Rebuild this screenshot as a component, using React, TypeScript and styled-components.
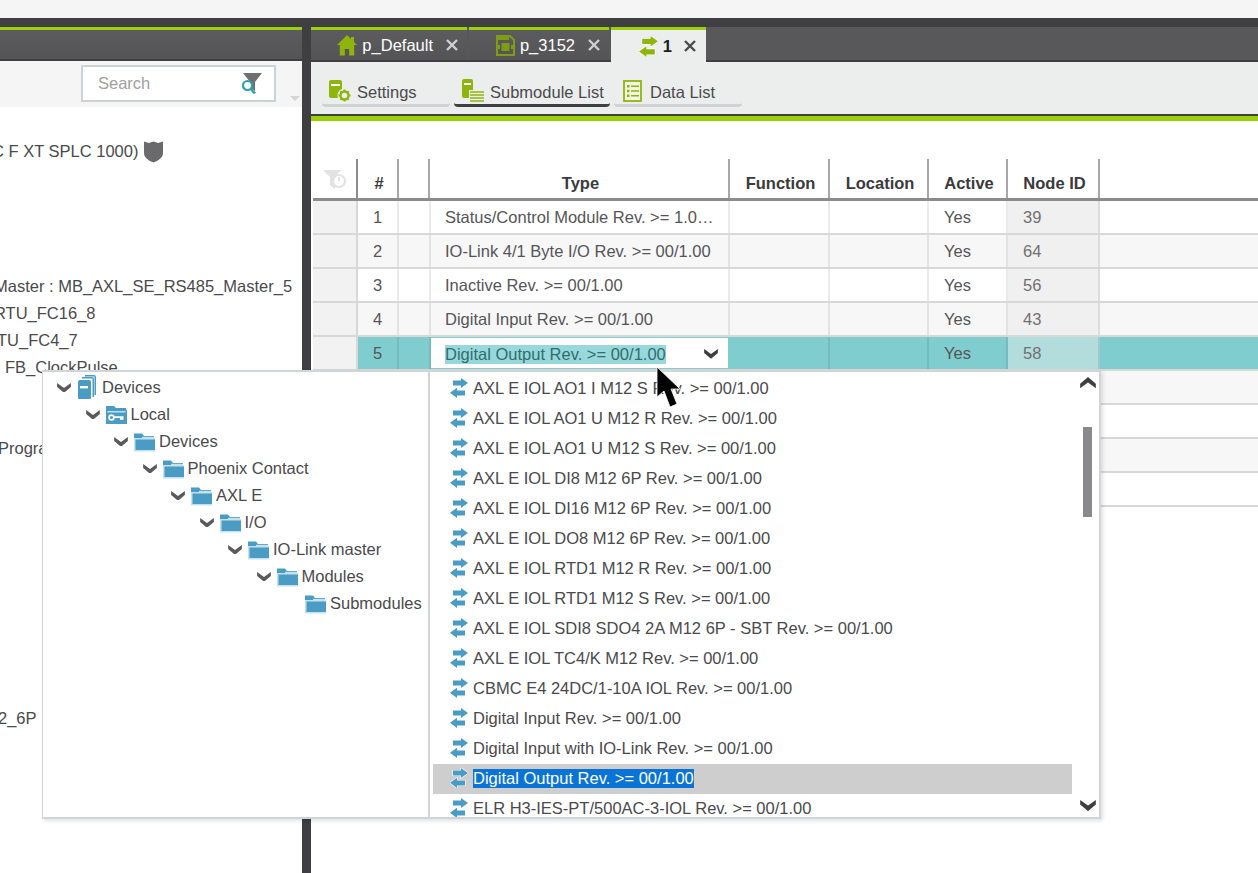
import React from "react";
import styled, { createGlobalStyle } from "styled-components";

const GREEN = "#8fb50c";
const BLUE = "#4a9cc4";

const treeLines = [
  { text: "C F XT SPLC 1000)", shift: -8, shield: true },
  { text: "" },
  { text: "" },
  { text: "" },
  { text: "" },
  { text: "Master : MB_AXL_SE_RS485_Master_5", shift: -6 },
  { text: "RTU_FC16_8", shift: -6 },
  { text: "TU_FC4_7", shift: -3 },
  { text: "FB_ClockPulse", shift: 5 },
  { text: "" },
  { text: "" },
  { text: "Program", shift: -2 },
  { text: "" },
  { text: "" },
  { text: "" },
  { text: "" },
  { text: "" },
  { text: "" },
  { text: "" },
  { text: "" },
  { text: "" },
  { text: "2_6P", shift: -2 },
];

const rows = [
  { n: 1, type: "Status/Control Module Rev. >= 1.00/1.00", active: "Yes", node: "39" },
  { n: 2, type: "IO-Link 4/1 Byte I/O Rev. >= 00/1.00", active: "Yes", node: "64" },
  { n: 3, type: "Inactive Rev. >= 00/1.00", active: "Yes", node: "56" },
  { n: 4, type: "Digital Input Rev. >= 00/1.00", active: "Yes", node: "43" },
  { n: 5, type: "Digital Output Rev. >= 00/1.00", active: "Yes", node: "58", selected: true },
  { n: 6, type: "", active: "", node: "" },
  { n: 7, type: "", active: "", node: "" },
  { n: 8, type: "", active: "", node: "" },
  { n: 9, type: "", active: "", node: "" },
];

const folders = [
  { label: "Devices", level: 0, icon: "stack" },
  { label: "Local", level: 1, icon: "key" },
  { label: "Devices", level: 2, icon: "folder" },
  { label: "Phoenix Contact", level: 3, icon: "folder" },
  { label: "AXL E", level: 4, icon: "folder" },
  { label: "I/O", level: 5, icon: "folder" },
  { label: "IO-Link master", level: 6, icon: "folder" },
  { label: "Modules", level: 7, icon: "folder" },
  { label: "Submodules", level: 8, icon: "folder", leaf: true },
];

const modules = [
  "AXL E IOL AO1 I M12 S Rev. >= 00/1.00",
  "AXL E IOL AO1 U M12 R Rev. >= 00/1.00",
  "AXL E IOL AO1 U M12 S Rev. >= 00/1.00",
  "AXL E IOL DI8 M12 6P Rev. >= 00/1.00",
  "AXL E IOL DI16 M12 6P Rev. >= 00/1.00",
  "AXL E IOL DO8 M12 6P Rev. >= 00/1.00",
  "AXL E IOL RTD1 M12 R Rev. >= 00/1.00",
  "AXL E IOL RTD1 M12 S Rev. >= 00/1.00",
  "AXL E IOL SDI8 SDO4 2A M12 6P - SBT Rev. >= 00/1.00",
  "AXL E IOL TC4/K M12 Rev. >= 00/1.00",
  "CBMC E4 24DC/1-10A IOL Rev. >= 00/1.00",
  "Digital Input Rev. >= 00/1.00",
  "Digital Input with IO-Link Rev. >= 00/1.00",
  "Digital Output Rev. >= 00/1.00",
  "ELR H3-IES-PT/500AC-3-IOL Rev. >= 00/1.00",
];

const Swap = ({ color = BLUE, halo = false, size = 18 }: { color?: string; halo?: boolean; size?: number }) => (
  <svg width={size} height={size + 2} viewBox="0 0 18 20">
    <g fill={color} stroke={halo ? "#fff" : "none"} strokeWidth={halo ? 1.2 : 0} paintOrder="stroke">
      <path d="M3 2.500h8V0l7 5-7 5V7.500H3z" />
      <path d="M15 12.500H7V9.800L0 14.800 7 20v-2.500h8z" />
    </g>
  </svg>
);

const Chevron = ({ up = false, color = "#5a5a5c", width = 14 }: { up?: boolean; color?: string; width?: number }) => (
  <svg width={width} height={width * 0.7} viewBox="0 0 14 10">
    <path d={up ? "M0 6l7-6 7 6v4L7 5 0 10z" : "M0 0l7 5 7-5v4l-7 6-7-6z"} fill={color} />
  </svg>
);

const Folder = () => (
  <svg width="22" height="20" viewBox="1 0 22 20">
    <path d="M1 1.500h8l2 2.500h10v3H1z" fill="#4a9cc4" />
    <path d="M1 6h21v13.500H1z" fill="#c4e2ee" />
    <path d="M2.500 7.500H22V18H2.500z" fill="#4a9cc4" />
    <path d="M9 4.800h12v1.500H9z" fill="#c4e2ee" />
  </svg>
);

const KeyFolder = () => (
  <svg width="22" height="20" viewBox="1 0 22 20">
    <path d="M1 1h8l2 2h10v3H1z" fill="#4a9cc4" />
    <path d="M1 5h21v14H1z" fill="#4a9cc4" />
    <path d="M2.500 6h18v1.500h-18z" fill="#c4e2ee" />
    <circle cx="6.500" cy="12.500" r="2.400" fill="none" stroke="#fff" strokeWidth="1.600" />
    <path d="M9 11.200h9.500v3.600H15v-1.800H9z" fill="#fff" />
  </svg>
);

const DeviceStack = () => (
  <svg width="20" height="25" viewBox="0 0 20 25">
    <path d="M8 0h9a2 2 0 0 1 2 2v18h-1.500V1.500H8z" fill="#4a9cc4" />
    <path d="M5 2h10a2 2 0 0 1 2 2v18h-1.500V3.500H5z" fill="#4a9cc4" />
    <path d="M3 5h9a2 2 0 0 1 2 2v16a1 1 0 0 1-1 1H2a1 1 0 0 1-1-1V7a2 2 0 0 1 2-2z" fill="#4a9cc4" />
    <path d="M3 11h8v2.400H3z" fill="#fff" />
  </svg>
);

const Home = () => (
  <svg width="20" height="21" viewBox="0 0 20 21">
    <path d="M10 0L0 10h2.800v10.500h5V14h4.400v6.500h5V10H20l-3-3V2h-3v2z" fill={GREEN} />
  </svg>
);

const PageIcon = () => (
  <svg width="19" height="21" viewBox="0 0 19 21">
    <path d="M1 1h13l4 4v15H1z" fill="none" stroke="#7f9c14" strokeWidth="2" />
    <path d="M1 1h12v4H1z" fill="#7f9c14" />
    <path d="M5.500 8h8v8h-8z" fill="#7f9c14" />
    <path d="M1 10h3v4H1zM15 10h3v4h-3z" fill="#7f9c14" />
  </svg>
);

const DeviceGear = () => (
  <svg width="24" height="24" viewBox="0 0 24 24">
    <rect x="1" y="1" width="13" height="18" rx="2" fill={GREEN} />
    <path d="M3 5h9v2H3z" fill="#fff" />
    <circle cx="16.500" cy="16.500" r="7" fill="#eceeed" />
    <circle cx="16.500" cy="16.500" r="4" fill="none" stroke={GREEN} strokeWidth="2.400" />
    <path d="M16.500 10.500v2.200M16.500 20.300v2.200M10.500 16.500h2.200M20.300 16.500h2.200M12.300 12.300l1.500 1.500M19.200 19.200l1.500 1.500M12.300 20.700l1.500-1.500M19.200 13.800l1.500-1.500" stroke={GREEN} strokeWidth="2" />
  </svg>
);

const DeviceList = () => (
  <svg width="24" height="24" viewBox="0 0 24 24">
    <rect x="1" y="0" width="11" height="19" rx="2" fill={GREEN} />
    <path d="M3 4h7v2H3z" fill="#fff" />
    <path d="M8 11h16v13H8z" fill="#eceeed" />
    <path d="M9 13h14M9 16h14M9 19h14M9 22h14" stroke={GREEN} strokeWidth="1.600" />
  </svg>
);

const ListBox = () => (
  <svg width="22" height="22" viewBox="0 0 22 22">
    <rect x="1" y="1" width="17" height="20" fill="#f3f6e4" stroke={GREEN} strokeWidth="1.800" />
    <path d="M4 5h2.500v2.500H4zM4 9.800h2.500v2.500H4zM4 14.500h2.500V17H4z" fill={GREEN} />
    <path d="M8 6.200h8M8 11h8M8 15.700h8" stroke={GREEN} strokeWidth="1.600" />
  </svg>
);

const Close = ({ dark = false }: { dark?: boolean }) => (
  <svg width="12" height="12" viewBox="0 0 12 12">
    <path d="M1 1l10 10M11 1L1 11" stroke={dark ? "#4a4a4c" : "#cfd0d2"} strokeWidth="2.400" />
  </svg>
);

const SearchFilter = () => (
  <svg width="22" height="22" viewBox="0 0 22 22">
    <path d="M2 0h19l-7 9v9l-5-4V9z" fill="#707072" />
    <circle cx="6.500" cy="12.500" r="4.500" fill="#fff" stroke="#2aa3ae" strokeWidth="2.200" />
    <path d="M10 16l4 4.500" stroke="#2aa3ae" strokeWidth="2.600" />
  </svg>
);

const FilterOff = () => (
  <svg width="24" height="22" viewBox="0 0 24 22">
    <path d="M0 1h18l-6 7v12l-5-4V8z" fill="#e2e2e2" />
    <circle cx="16" cy="12" r="6" fill="#fff" stroke="#e2e2e2" strokeWidth="2" />
    <path d="M16 8v4" stroke="#e2e2e2" strokeWidth="2" />
  </svg>
);

const Shield = () => (
  <svg width="19" height="23" viewBox="0 0 20 23">
    <path d="M0 1l5 1.500L10 1l5 1.500L20 1v12c0 5-5 8-10 10C5 21 0 18 0 13z" fill="#6a6a6c" />
  </svg>
);

const App: React.FC = () => {
  return (
    <Page>
      <GlobalStyle />
      <TopStrip />
      <Shell>
        <LeftPanel>
          <LeftHeader />
          <LeftTools>
            <SearchBox>
              <SearchHint>Search</SearchHint>
              <SearchFilter />
            </SearchBox>
            <ToolCaret />
          </LeftTools>
          <ProjectTree>
            {treeLines.map((line, i) => (
              <ProjectLine key={i} $shift={line.shift || 0}>
                {line.text}
                {line.shield && <Shield />}
              </ProjectLine>
            ))}
          </ProjectTree>
        </LeftPanel>
        <RightPanel>
          <TabBar>
            <Tab $width={156}>
              <Home />
              <TabLabel>p_Default</TabLabel>
              <Close />
            </Tab>
            <Tab $width={140}>
              <PageIcon />
              <TabLabel>p_3152</TabLabel>
              <Close />
            </Tab>
            <Tab $width={95} $active>
              <Swap color={GREEN} halo size={19} />
              <TabLabel $active>1</TabLabel>
              <Close dark />
            </Tab>
          </TabBar>
          <SubBar>
            <SubButton $width={128} $inset={6}>
              <DeviceGear />
              <SubLabel>Settings</SubLabel>
            </SubButton>
            <SubButton $width={156} $inset={7} $current>
              <DeviceList />
              <SubLabel>Submodule List</SubLabel>
            </SubButton>
            <SubButton $width={128} $inset={9}>
              <ListBox />
              <SubLabel>Data List</SubLabel>
            </SubButton>
          </SubBar>
          <TableArea>
            <HeadRow>
              <FilterCell>
                <FilterOff />
              </FilterCell>
              <HeadCell>#</HeadCell>
              <HeadCell />
              <HeadCell>Type</HeadCell>
              <HeadCell>Function</HeadCell>
              <HeadCell>Location</HeadCell>
              <HeadCell>Active</HeadCell>
              <HeadCell>Node ID</HeadCell>
              <HeadCell $last />
            </HeadRow>
            {rows.map((row) => (
              <Row key={row.n} $selected={row.selected} $shaded={row.n % 2 === 0}>
                <MarkerCell />
                <Cell $center>{row.n}</Cell>
                <Cell />
                {row.selected ? (
                  <SelectCell>
                    <SelectBox>
                      <SelectedText>{row.type}</SelectedText>
                      <Chevron color="#3f3f41" />
                    </SelectBox>
                  </SelectCell>
                ) : (
                  <TypeCell>
                    <Ellipsis>{row.type}</Ellipsis>
                  </TypeCell>
                )}
                <Cell />
                <Cell />
                <Cell>{row.active}</Cell>
                <NodeCell $selected={row.selected}>{row.node}</NodeCell>
                <Cell $last />
              </Row>
            ))}
          </TableArea>
        </RightPanel>
      </Shell>

      <Dropdown>
        <FolderPane>
          {folders.map((f, i) => (
            <FolderRow key={i} $level={f.level}>
              <ChevronSlot>{!f.leaf && <Chevron />}</ChevronSlot>
              <IconSlot>
                {f.icon === "stack" ? <DeviceStack /> : f.icon === "key" ? <KeyFolder /> : <Folder />}
              </IconSlot>
              {f.label}
            </FolderRow>
          ))}
        </FolderPane>
        <ModulePane>
          {modules.map((m) => {
            const picked = m.startsWith("Digital Output");
            return (
              <ModuleRow key={m} $picked={picked}>
                <Swap halo={picked} />
                {picked ? <PickedText>{m}</PickedText> : <span>{m}</span>}
              </ModuleRow>
            );
          })}
          <ScrollUp>
            <Chevron up color="#3f3f41" width={16} />
          </ScrollUp>
          <ScrollThumb />
          <ScrollDown>
            <Chevron color="#3f3f41" width={16} />
          </ScrollDown>
        </ModulePane>
      </Dropdown>

      <Cursor width="25" height="43" viewBox="0 0 25 43">
        <path d="M1 1v30l7-6 6 16 7-3-6-15h9z" fill="#000" stroke="#fff" strokeWidth="0.800" />
      </Cursor>
    </Page>
  );
};

const GlobalStyle = createGlobalStyle`
  html, body {
    margin: 0;
    padding: 0;
    background: #fff;
  }
  * {
    box-sizing: border-box;
  }
`;

const Page = styled.div`
  position: relative;
  width: 1258px;
  height: 873px;
  overflow: hidden;
  font-family: "Liberation Sans", Arial, sans-serif;
  font-size: 16.5px;
  color: #4a4a4c;
`;

const TopStrip = styled.div`
  height: 18px;
  background: #f5f5f5;
`;

const Shell = styled.div`
  display: flex;
  height: 855px;
  padding-top: 9px;
  background: #3f3f41;
`;

const LeftPanel = styled.div`
  width: 302px;
  margin-right: 9px;
  display: flex;
  flex-direction: column;
  background: #fff;
  overflow: hidden;
`;

const LeftHeader = styled.div`
  height: 34px;
  flex: none;
  border-top: 3px solid #9ad10b;
  border-bottom: 2px solid #3f3f41;
  background: linear-gradient(#5c5c5e, #545456);
`;

const LeftTools = styled.div`
  height: 46px;
  flex: none;
  display: flex;
  background: #f5f5f5;
  padding: 4px 0 0 81px;
`;

const SearchBox = styled.div`
  width: 195px;
  height: 37px;
  display: flex;
  align-items: center;
  justify-content: space-between;
  padding: 0 11px 0 15px;
  background: #fff;
  border: 2px solid #cdd2d6;
`;

const SearchHint = styled.span`
  color: #a0a0a0;
`;

const ToolCaret = styled.div`
  width: 0;
  height: 0;
  margin: 31px 0 0 14px;
  border-left: 5px solid transparent;
  border-right: 5px solid transparent;
  border-top: 5px solid #d4d6d8;
`;

const ProjectTree = styled.div`
  padding-top: 31px;
`;

const ProjectLine = styled.div<{ $shift: number }>`
  height: 27px;
  display: flex;
  align-items: center;
  gap: 6px;
  white-space: nowrap;
  margin-left: ${(p) => p.$shift}px;
`;

const RightPanel = styled.div`
  flex: 1;
  display: flex;
  flex-direction: column;
  background: #fff;
  min-width: 0;
`;

const TabBar = styled.div`
  height: 35px;
  flex: none;
  display: flex;
  gap: 2px;
  background: #58585a;
  border-bottom: 2px solid #3f3f41;
`;

const Tab = styled.div<{ $width: number; $active?: boolean }>`
  width: ${(p) => p.$width}px;
  height: ${(p) => (p.$active ? 35 : 33)}px;
  flex: none;
  display: flex;
  align-items: center;
  justify-content: flex-end;
  gap: 5px;
  padding: 0 ${(p) => (p.$active ? 10 : 9)}px 0 0;
  border-top: 3px solid #9ad10b;
  background: ${(p) => (p.$active ? "#eceeed" : "linear-gradient(#5c5c5e, #545456)")};
`;

const TabLabel = styled.span<{ $active?: boolean }>`
  color: ${(p) => (p.$active ? "#1c1c1c" : "#fff")};
  font-weight: ${(p) => (p.$active ? 700 : 400)};
  margin-right: ${(p) => (p.$active ? 7 : 8)}px;
`;

const SubBar = styled.div`
  height: 59px;
  flex: none;
  display: flex;
  gap: 4px;
  padding: 13px 0 0 11px;
  background: #eceeed;
  border-bottom: 5px solid #9ad10b;
  box-shadow: inset 0 -2px 0 #3f3f41;
`;

const SubButton = styled.div<{ $width: number; $inset: number; $current?: boolean }>`
  width: ${(p) => p.$width}px;
  height: 32px;
  display: flex;
  align-items: center;
  gap: 5px;
  padding: 2px 0 0 ${(p) => p.$inset}px;
  border-bottom: 3px solid ${(p) => (p.$current ? "#3f3f41" : "#cfd1d3")};
  border-radius: 0 0 4px 4px;
`;

const SubLabel = styled.span`
  padding-top: 3px;
`;

const TableArea = styled.div`
  padding: 38px 0 0 2px;
`;

const gridColumns = "45px 41px 31px 300px 100px 99px 79px 92px 1fr";

const HeadRow = styled.div`
  display: grid;
  grid-template-columns: ${gridColumns};
  height: 42px;
  border-bottom: 3px solid #8c8c8e;
`;

const HeadCell = styled.div<{ $last?: boolean }>`
  display: flex;
  align-items: center;
  justify-content: center;
  padding: 10px 0 0 3px;
  font-weight: 700;
  color: #3a3a3c;
  border-right: ${(p) => (p.$last ? "none" : "2px solid #a8a8aa")};
`;

const FilterCell = styled.div`
  display: flex;
  align-items: center;
  padding: 2px 0 0 10px;
  border-right: 2px solid #8c8c8e;
`;

const Row = styled.div<{ $selected?: boolean; $shaded?: boolean }>`
  display: grid;
  grid-template-columns: ${gridColumns};
  height: 34px;
  border-bottom: 2px solid #d8d8d8;
  color: #555557;
  background: ${(p) => (p.$selected ? "#80cdd0" : p.$shaded ? "#f7f7f7" : "#fff")};
`;

const Cell = styled.div<{ $center?: boolean; $last?: boolean }>`
  display: flex;
  align-items: center;
  min-width: 0;
  padding: 0 15px;
  justify-content: ${(p) => (p.$center ? "center" : "flex-start")};
  border-right: ${(p) => (p.$last ? "none" : "2px solid rgba(0, 0, 0, 0.08)")};
`;

const TypeCell = styled(Cell)`
  padding-right: 12px;
`;

const MarkerCell = styled.div`
  background: #f2f2f2;
  border-right: 2px solid #d8d8d8;
`;

const NodeCell = styled(Cell)<{ $selected?: boolean }>`
  color: #707072;
  background: ${(p) => (p.$selected ? "#b3dcdd" : "#f0f0f0")};
`;

const Ellipsis = styled.span`
  overflow: hidden;
  white-space: nowrap;
  text-overflow: ellipsis;
`;

const SelectCell = styled.div`
  padding: 1px 2px 1px 1px;
`;

const SelectBox = styled.div`
  height: 30px;
  display: flex;
  align-items: center;
  justify-content: space-between;
  padding: 2px 10px 0 14px;
  background: #fff;
`;

const SelectedText = styled.span`
  background: #98d8da;
  color: #2e6e70;
`;

const Dropdown = styled.div`
  position: absolute;
  left: 42px;
  top: 370px;
  width: 1059px;
  height: 449px;
  display: flex;
  background: #fff;
  border: 2px solid #d2d5d8;
  border-left-width: 1px;
  box-shadow: 2px 2px 4px rgba(0, 0, 0, 0.12);
`;

const FolderPane = styled.div`
  width: 387px;
  flex: none;
  padding-top: 2px;
  border-right: 2px solid #d2d5d8;
`;

const FolderRow = styled.div<{ $level: number }>`
  height: 27px;
  display: flex;
  align-items: center;
  white-space: nowrap;
  padding-left: ${(p) => 14 + p.$level * 28.5}px;
`;

const ChevronSlot = styled.span`
  width: 20px;
  flex: none;
  display: flex;
`;

const IconSlot = styled.span`
  width: 25px;
  flex: none;
  display: flex;
`;

const ModulePane = styled.div`
  position: relative;
  flex: 1;
  overflow: hidden;
  padding: 2px 27px 0 3px;
`;

const ModuleRow = styled.div<{ $picked?: boolean }>`
  height: 30px;
  display: flex;
  align-items: center;
  gap: 5px;
  padding: 0 0 2px 17px;
  white-space: nowrap;
  background: ${(p) => (p.$picked ? "#cecece" : "transparent")};
`;

const PickedText = styled.span`
  background: #0a74d6;
  color: #fff;
`;

const ScrollUp = styled.div`
  position: absolute;
  top: 5px;
  right: 3px;
  display: flex;
`;

const ScrollDown = styled.div`
  position: absolute;
  bottom: 6px;
  right: 3px;
  display: flex;
`;

const ScrollThumb = styled.div`
  position: absolute;
  top: 55px;
  right: 7px;
  width: 9px;
  height: 90px;
  background: #8a8a8c;
`;

const Cursor = styled.svg`
  position: absolute;
  left: 656px;
  top: 366px;
`;

export default App;
